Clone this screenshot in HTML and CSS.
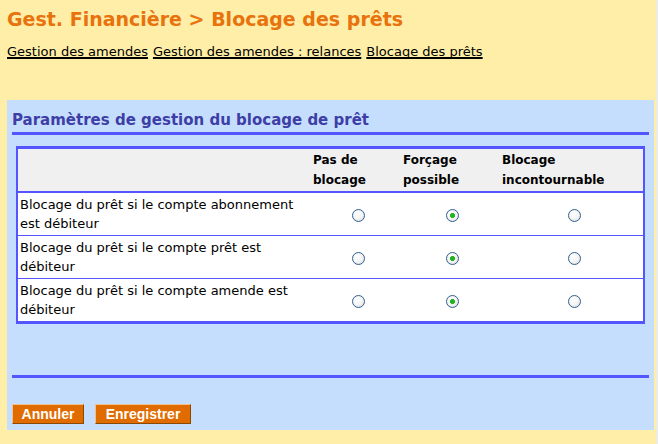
FILE: index.html
```html
<!DOCTYPE html>
<html lang="fr">
<head>
<meta charset="utf-8">
<title>Blocage des prêts</title>
<link rel="stylesheet" href="styles.css">
</head>
<body>
<h1 class="title">Gest. Financière &gt; Blocage des prêts</h1>
<nav class="links">
  <a href="#">Gestion des amendes</a>
  <a href="#">Gestion des amendes : relances</a>
  <a href="#">Blocage des prêts</a>
</nav>
<form class="panel">
  <h2 class="panel-title">Paramètres de gestion du blocage de prêt</h2>
  <table class="grid">
    <colgroup>
      <col class="c-label"><col class="c-a"><col class="c-b"><col class="c-c">
    </colgroup>
    <thead>
      <tr>
        <th></th>
        <th>Pas de<br>blocage</th>
        <th>Forçage<br>possible</th>
        <th>Blocage<br>incontournable</th>
      </tr>
    </thead>
    <tbody>
      <tr>
        <td class="label">Blocage du prêt si le compte abonnement est débiteur</td>
        <td class="opt"><input type="radio" name="r1"></td>
        <td class="opt"><input type="radio" name="r1" checked></td>
        <td class="opt"><input type="radio" name="r1"></td>
      </tr>
      <tr>
        <td class="label">Blocage du prêt si le compte prêt est débiteur</td>
        <td class="opt"><input type="radio" name="r2"></td>
        <td class="opt"><input type="radio" name="r2" checked></td>
        <td class="opt"><input type="radio" name="r2"></td>
      </tr>
      <tr>
        <td class="label">Blocage du prêt si le compte amende est débiteur</td>
        <td class="opt"><input type="radio" name="r3"></td>
        <td class="opt"><input type="radio" name="r3" checked></td>
        <td class="opt"><input type="radio" name="r3"></td>
      </tr>
    </tbody>
  </table>
  <div class="rule"></div>
  <div class="actions">
    <button type="button" class="btn btn-cancel">Annuler</button>
    <button type="button" class="btn btn-save">Enregistrer</button>
  </div>
</form>
</body>
</html>
```
FILE: styles.css
```css
html, body {
  margin: 0;
  padding: 0;
}
body {
  background: #ffeea8;
  font-family: "DejaVu Sans", Verdana, sans-serif;
  color: #000;
  width: 656px;
  min-height: 444px;
  border-right: 2px solid #ecebe4;
}
.title {
  margin: 0;
  padding: 7px 0 0 7px;
  font-size: 19px;
  line-height: 24px;
  font-weight: bold;
  color: #e8720c;
}
.links {
  padding: 13px 0 0 7px;
  font-size: 13px;
  line-height: 16px;
  display: flex;
  gap: 5px;
}
.links a {
  color: #000;
  text-decoration: underline;
  text-decoration-thickness: 2px;
  text-underline-offset: 1px;
  text-decoration-skip-ink: none;
}
.panel {
  margin: 40px 0 0 7px;
  width: 647px;
  height: 330px;
  background: #c5defe;
  padding: 10px 5px 0 5px;
  box-sizing: border-box;
  display: flex;
  flex-direction: column;
}
.panel-title {
  margin: 0;
  font-size: 15px;
  line-height: 20px;
  font-weight: bold;
  color: #3e3ea6;
  width: 637px;
  border-bottom: 3px solid #5555ff;
  padding-bottom: 2px;
}
.grid {
  margin: 11px 0 0 4px;
  width: 629px;
  border-collapse: separate;
  border-spacing: 0;
  background: #fff;
  border-style: solid;
  border-color: #5555ff;
  border-width: 3px 2px 3px 2px;
  font-size: 13px;
  box-sizing: border-box;
}
.c-label { width: 292px; }
.c-a { width: 90px; }
.c-b { width: 99px; }
.c-c { width: 144px; }
.grid thead th {
  background: #f0f0f0;
  font-size: 12px;
  line-height: 20px;
  text-align: left;
  vertical-align: top;
  padding: 1px 3px 1px 3px;
  border-bottom: 2px solid #5555ff;
}
.grid td {
  line-height: 19px;
  padding: 2px;
  border-bottom: 1px solid #5555ff;
}
.grid tbody tr:last-child td {
  border-bottom: none;
  padding-bottom: 2px;
}
.grid td.opt {
  text-align: center;
  vertical-align: middle;
  padding-left: 8px;
}
input[type="radio"] {
  appearance: none;
  -webkit-appearance: none;
  margin: 0;
  width: 13px;
  height: 13px;
  border-radius: 50%;
  border: 1px solid #2f5f8f;
  background: radial-gradient(circle at 40% 35%, #ffffff 0%, #f4f4f4 50%, #d8d8d8 100%);
  box-sizing: border-box;
  vertical-align: middle;
  display: inline-block;
}
input[type="radio"]:checked {
  background:
    radial-gradient(circle, #21b421 0 2.2px, transparent 2.8px),
    radial-gradient(circle at 40% 35%, #ffffff 0%, #f4f4f4 50%, #d8d8d8 100%);
}
.rule {
  margin-top: 51px;
  width: 637px;
  height: 3px;
  background: #5555ff;
}
.actions {
  margin-top: 26px;
  display: flex;
  gap: 11px;
}
.btn {
  font-family: "Liberation Sans", Arial, sans-serif;
  font-weight: bold;
  font-size: 14px;
  line-height: 16px;
  color: #fff;
  background: #e06c00;
  border: 1px solid;
  border-color: #f2c08a #8a4a00 #8a4a00 #f2c08a;
  padding: 1px 6px;
  height: 20px;
  margin: 0;
  cursor: pointer;
}
.btn-cancel { width: 72px; }
.btn-save { width: 96px; }
```
